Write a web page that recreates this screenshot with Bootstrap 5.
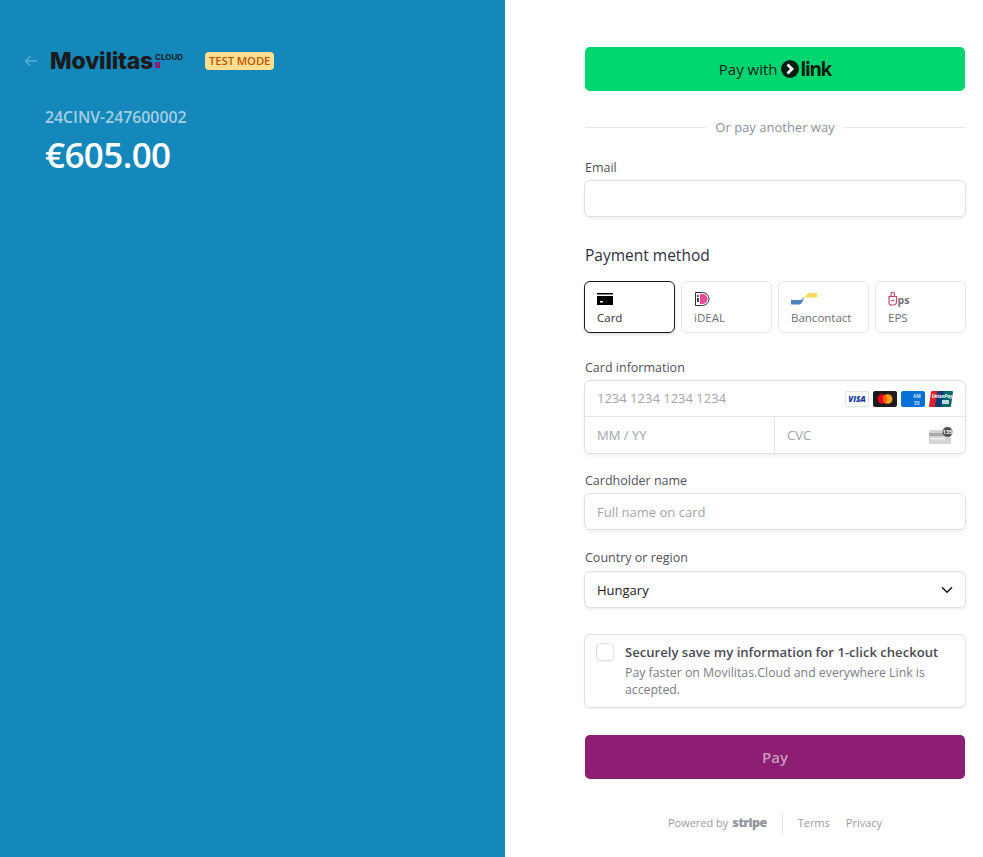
<!DOCTYPE html>
<html lang="en">

<head>
    <meta charset="UTF-8">
    <meta name="viewport" content="width=device-width, initial-scale=1.0">
    <title>Checkout</title>
    <link href="https://cdn.jsdelivr.net/npm/bootstrap@5.3.3/dist/css/bootstrap.min.css" rel="stylesheet">
    <style>
        html, body { height: 100%; }
        body { font-family: "Open Sans", "Noto Sans", sans-serif; font-size: 13px; color: #1a1a1a; background: #fff; overflow: hidden; }
        .shell { height: 857px; }
        .side { width: 505px; background: #1488ba; padding: 47px 0 0 24px; flex: none; }
        .back-arrow { width: 14px; height: 14px; margin-right: 12px; }
        .logo-word { font-family: Inter, sans-serif; font-weight: 800; font-size: 23px; letter-spacing: -.2px; line-height: 28px; color: #1a1a1a; }
        .logo-tail { width: 31px; height: 28px; position: relative; margin-right: 21px; }
        .logo-cloud { position: absolute; left: 2px; top: 6px; font-family: Inter, sans-serif; font-weight: 700; font-size: 8px; line-height: 8px; color: #1a1a1a; }
        .logo-dot { position: absolute; left: 2px; top: 15px; width: 5px; height: 6px; background: #8e1d74; }
        .test-tag { background: #ffde92; color: #bb5504; font-size: 11.3px; font-weight: 600; line-height: 18px; padding: 0 4px; border-radius: 4px; letter-spacing: -.1px; }
        .inv-box { padding: 31px 0 0 21px; }
        .inv-no { color: #a4cfe3; font-size: 15.8px; font-weight: 600; line-height: 22px; }
        .inv-sum { color: #fff; font-size: 35px; font-weight: 600; line-height: 44px; letter-spacing: -.6px; margin-top: 5px; }
        .main-col { padding: 47px 0 0 80px; }
        .form-col { width: 381px; }
        .link-btn { height: 44px; background: #00d66f; border: 0; border-radius: 5px; color: #1a1a1a; font-size: 15px; width: 380px; }
        .link-mark { margin: 0 2px 0 3px; }
        .link-word { font-family: "Noto Sans", sans-serif; font-size: 19px; font-weight: 700; line-height: 24px; letter-spacing: -1.200px; color: #011e0f; }
        .or-line { height: 20px; margin-top: 26px; width: 380px; color: #8d9199; font-size: 13px; }
        .or-line::before, .or-line::after { content: ""; flex: 1; height: 1px; background: #e6e6e6; }
        .or-line span { padding: 2px 9px 0; }
        .fld-label { font-size: 12.5px; line-height: 18px; color: #4f5159; margin: 0; }
        .fld { height: 37px; margin-left: -1px; border: 1px solid #e0e0e0; border-radius: 6px; background: #fff; box-shadow: 0 2px 3px rgba(0, 0, 0, .06); padding: 1px 12px 0; font-size: 13px; color: #1a1a1a; line-height: 35px; }
        .ph { color: #a3a5aa; }
        .pay-title { font-size: 15.5px; font-weight: 500; line-height: 22px; color: #30313d; margin-top: 27px; }
        .pay-tabs { gap: 6px; margin-top: 15px; margin-left: -1px; }
        .pay-tab { width: 91px; height: 52px; border: 1px solid #e6e6e6; border-radius: 6px; padding: 9px 12px 0; font-size: 11.5px; line-height: 16px; color: #6d6e78; box-shadow: 0 1px 2px rgba(0, 0, 0, .03); }
        .pay-tab.on { border-color: #1a1a1a; color: #30313d; box-shadow: 0 2px 3px rgba(0, 0, 0, .12); }
        .pay-tab svg { display: block; height: 16px; margin-bottom: 3px; }
        .card-box { margin-left: -1px; border: 1px solid #e0e0e0; border-radius: 6px; box-shadow: 0 2px 3px rgba(0, 0, 0, .06); height: 74px; }
        .card-row { height: 35px; padding: 0 12px; line-height: 35px; }
        .card-row + .card-row { border-top: 1px solid #e6e6e6; height: 37px; }
        .card-half { width: 189px; padding: 0 12px; line-height: 36px; }
        .card-half + .card-half { flex: 1; border-left: 1px solid #e6e6e6; }
        .brand { width: 24px; height: 16px; margin-left: 4px; display: block; }
        .save-box { height: 74px; margin-top: 26px; margin-left: -1px; border: 1px solid #e0e0e0; border-radius: 6px; box-shadow: 0 1px 2px rgba(0, 0, 0, .06); padding: 8px 12px 0 11px; }
        .save-check { width: 18px; height: 18px; border: 1px solid #e0e0e0; border-radius: 4px; box-shadow: 0 1px 2px rgba(0, 0, 0, .06); margin-right: 11px; flex: none; }
        .save-head { font-size: 13.1px; font-weight: 600; line-height: 19px; color: #4a4b54; }
        .save-note { font-size: 12.3px; line-height: 17px; color: #7d7e86; margin-top: 2px; }
        .pay-btn { height: 44px; width: 380px; margin-top: 27px; border: 0; border-radius: 5px; background: #8e1d74; color: #c99abd; font-size: 15px; font-weight: 600; }
        .foot { width: 380px; margin-top: 33px; height: 22px; font-size: 11px; color: #9a9ca3; }
        .foot-brand { font-weight: 800; font-size: 12.5px; color: #94969d; letter-spacing: -.6px; margin-left: 4px; }
        .foot-rule { width: 1px; height: 21px; background: #e6e6e6; margin: 0 15px; }
    </style>
</head>

<body>
    <div class="shell d-flex">
        <div class="side">
            <div class="d-flex align-items-center">
                <svg class="back-arrow" viewBox="0 0 14 14" fill="none" stroke="#5fadd1" stroke-width="1.5"><path d="M13 7H1.500M6.500 2 1.500 7l5 5"/></svg>
                <span class="logo-word">Movilitas</span>
                <span class="logo-tail"><span class="logo-cloud">CLOUD</span><span class="logo-dot"></span></span>
                <span class="test-tag">TEST MODE</span>
            </div>
            <div class="inv-box">
                <div class="inv-no">24CINV-247600002</div>
                <div class="inv-sum">€605.00</div>
            </div>
        </div>
        <div class="main-col">
            <div class="form-col">
                <button class="link-btn d-flex align-items-center justify-content-center" type="button">
                    <span>Pay with</span>
                    <svg width="18" height="18" viewBox="0 0 18 18" class="link-mark"><circle cx="9" cy="9" r="9" fill="#011e0f"/><path d="M6.500 4.500 11 9l-4.500 4.500" fill="none" stroke="#fff" stroke-width="2.800"/></svg>
                    <span class="link-word">link</span>
                </button>
                <div class="or-line d-flex align-items-center"><span>Or pay another way</span></div>

                <p class="fld-label" style="margin-top:22px">Email</p>
                <div class="fld" style="margin-top:3px"></div>

                <div class="pay-title">Payment method</div>
                <div class="pay-tabs d-flex">
                    <div class="pay-tab on">
                        <svg width="16" height="16" viewBox="0 0 16 16"><path d="M0 2h16v1.500H0zM0 5h16v9H0z" fill="#000"/><rect x="3" y="10" width="3" height="1.500" fill="#fff"/></svg>
                        Card
                    </div>
                    <div class="pay-tab">
                        <svg width="16" height="16" viewBox="0 0 16 16"><path d="M1.500 1.500h7a6.500 6.500 0 0 1 0 13h-7z" fill="#fff" stroke="#30313d" stroke-width="1"/><path d="M6 3h2.500a5 5 0 0 1 0 10H6z" fill="#ec4899"/><rect x="3" y="7" width="1.800" height="4" fill="#30313d"/><circle cx="3.900" cy="5" r="1" fill="#30313d"/></svg>
                        iDEAL
                    </div>
                    <div class="pay-tab">
                        <svg width="26" height="16" viewBox="0 0 26 16"><path d="M0 9h9c2 0 3-1.500 4.500-3L11 11.500C10 13 9 13.500 7 13.500H0z" fill="#4a84c4"/><path d="M26 2v4.500H15.500C13 6.500 13.500 6 15 4.500 16 3 17 2 19 2z" fill="#fbd75b"/></svg>
                        Bancontact
                    </div>
                    <div class="pay-tab">
                        <svg width="22" height="16" viewBox="0 0 22 16"><path d="M1 5.500h7.500V11a3 3 0 0 1-3 3h-1.500A2.500 2.500 0 0 1 1 11.500z" fill="none" stroke="#c8447f" stroke-width="1.200"/><path d="M3 5V3a1.700 1.700 0 0 1 3.500 0v2" fill="none" stroke="#c8447f" stroke-width="1.200"/><path d="M3 9.500h3.500" stroke="#c8447f" stroke-width="1"/><text x="9.500" y="12.500" font-family="Open Sans, sans-serif" font-weight="700" font-size="10.500" fill="#6d6e78">ps</text></svg>
                        EPS
                    </div>
                </div>

                <p class="fld-label" style="margin-top:26px">Card information</p>
                <div class="card-box" style="margin-top:3px">
                    <div class="card-row d-flex align-items-center justify-content-between">
                        <span class="ph">1234 1234 1234 1234</span>
                        <span class="d-flex">
                            <svg class="brand" viewBox="0 0 24 16"><rect x=".5" y=".5" width="23" height="15" rx="1.500" fill="#fff" stroke="#e3e3e3"/><text x="12" y="11" text-anchor="middle" font-family="Open Sans, sans-serif" font-style="italic" font-weight="800" font-size="8" fill="#1434a4">VISA</text></svg>
                            <svg class="brand" viewBox="0 0 24 16"><rect width="24" height="16" rx="2" fill="#1c1c1c"/><circle cx="9.300" cy="8" r="4.800" fill="#eb001b"/><circle cx="14.700" cy="8" r="4.800" fill="#f79e1b"/><path d="M12 4a4.800 4.800 0 0 1 0 8 4.800 4.800 0 0 1 0-8z" fill="#ff5f00"/></svg>
                            <svg class="brand" viewBox="0 0 24 16"><rect width="24" height="16" rx="2" fill="#0570d6"/><text x="16" y="7.200" text-anchor="middle" font-family="Open Sans, sans-serif" font-weight="700" font-size="4.500" fill="#cfe6fb">AM</text><text x="16" y="13.500" text-anchor="middle" font-family="Open Sans, sans-serif" font-weight="700" font-size="4.500" fill="#cfe6fb">EX</text></svg>
                            <svg class="brand" viewBox="0 0 24 16"><path d="M3 0h7L7.500 16H1a1 1 0 0 1-1-1L2 1a1 1 0 0 1 1-1z" fill="#d8232a"/><path d="M8.500 0h8L14 16H6z" fill="#0b3a7c"/><path d="M15 0h8a1 1 0 0 1 1 1l-2 14a1 1 0 0 1-1 1h-8.500z" fill="#00676d"/><text x="13" y="7" text-anchor="middle" font-family="Open Sans, sans-serif" font-style="italic" font-weight="700" font-size="4.600" fill="#fff">UnionPay</text><rect x="13" y="9" width="7" height="4" fill="#bcd8d4"/></svg>
                        </span>
                    </div>
                    <div class="card-row d-flex p-0">
                        <div class="card-half ph">MM / YY</div>
                        <div class="card-half d-flex align-items-center justify-content-between">
                            <span class="ph">CVC</span>
                            <svg width="24" height="17" viewBox="0 0 24 17"><rect y="3" width="22" height="14" rx="1.500" fill="#d5d5d5"/><rect y="6" width="22" height="3" fill="#a9a9a9"/><rect x="2" y="11" width="14" height="1.500" fill="#f2f2f2"/><circle cx="18.500" cy="5" r="5" fill="#4f4f4f"/><text x="18.500" y="7" text-anchor="middle" font-family="Open Sans, sans-serif" font-weight="700" font-size="5.500" fill="#fff">135</text></svg>
                        </div>
                    </div>
                </div>

                <p class="fld-label" style="margin-top:18px">Cardholder name</p>
                <div class="fld ph" style="margin-top:3px">Full name on card</div>

                <p class="fld-label" style="margin-top:19px">Country or region</p>
                <div class="fld d-flex align-items-center justify-content-between" style="margin-top:4px">
                    <span>Hungary</span>
                    <svg width="12" height="8" viewBox="0 0 12 8" fill="none" stroke="#1a1a1a" stroke-width="1.600"><path d="M1 1.200l5 5 5-5"/></svg>
                </div>

                <div class="save-box d-flex">
                    <span class="save-check"></span>
                    <div>
                        <div class="save-head">Securely save my information for 1-click checkout</div>
                        <div class="save-note">Pay faster on Movilitas.Cloud and everywhere Link is accepted.</div>
                    </div>
                </div>

                <button class="pay-btn d-block" type="button">Pay</button>

                <div class="foot d-flex align-items-center justify-content-center">
                    <span>Powered by</span><span class="foot-brand">stripe</span>
                    <span class="foot-rule"></span>
                    <span>Terms</span><span class="ms-3">Privacy</span>
                </div>
            </div>
        </div>
    </div>

    <script src="https://cdn.jsdelivr.net/npm/bootstrap@5.3.3/dist/js/bootstrap.bundle.min.js"></script>
</body>

</html>
